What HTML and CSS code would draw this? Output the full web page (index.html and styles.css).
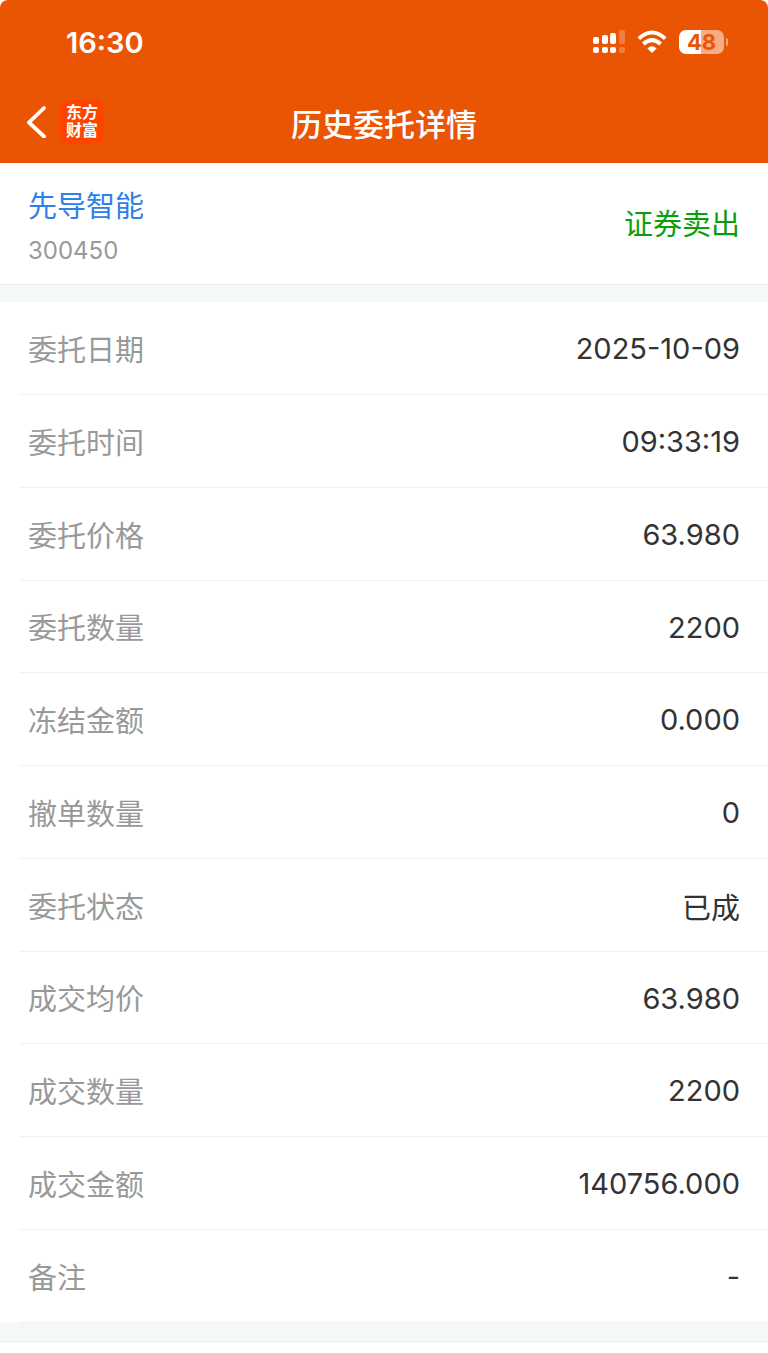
FILE: index.html
```
<!DOCTYPE html>
<html lang="zh-CN">

<head>
  <meta charset="UTF-8" />
  <meta name="viewport" content="width=device-width, initial-scale=1.0" />
  <title>历史委托详情</title>
  <link rel="stylesheet" href="styles.css">
</head>

<body>

  <header class="header">
    <div class="status-bar">
      <span class="clock">16:30</span>
      <div class="status-icons">
        <svg class="signal" viewBox="0 0 32 24" fill="#fff">
          <rect x="0" y="7" width="6" height="7" rx="2" />
          <rect x="9" y="5" width="6" height="9" rx="2" />
          <rect x="17" y="3" width="6" height="11" rx="2" />
          <rect x="26" y="0" width="6" height="14" rx="2" opacity="0.25" />
          <rect x="0" y="17" width="6" height="6" rx="2" />
          <rect x="9" y="17" width="6" height="6" rx="2" />
          <rect x="17" y="17" width="6" height="6" rx="2" />
          <rect x="26" y="17" width="6" height="6" rx="2" opacity="0.25" />
        </svg>
        <svg class="wifi" viewBox="0 0 30 24" fill="none" stroke="#fff" stroke-width="4">
          <path d="M1.8 8.6 Q15 -3.6 28.2 8.6" />
          <path d="M6.4 14 Q15 6.2 23.6 14" />
          <path d="M15 23 L10.4 18.4 Q15 14.2 19.6 18.4 Z" fill="#fff" stroke="none" />
        </svg>
        <div class="battery">
          <span class="battery-level">48</span>
          <span class="battery-tip"></span>
        </div>
      </div>
    </div>

    <nav class="nav-bar">
      <div class="nav-left">
        <button class="back" type="button" aria-label="返回">
          <svg viewBox="0 0 20 32" fill="none" stroke="#fff" stroke-width="3.8" stroke-linecap="round">
            <path d="M17 2 L2 16.5 L17 30.5" />
          </svg>
        </button>
        <div class="logo">
          <div>东方</div>
          <div>财富</div>
        </div>
      </div>
      <h1>历史委托详情</h1>
    </nav>
  </header>

  <main>
    <section class="stock">
      <div>
        <a class="stock-name" href="#">先导智能</a>
        <div class="stock-code">300450</div>
      </div>
      <span class="direction">证券卖出</span>
    </section>

    <dl class="details">
      <div class="row"><dt>委托日期</dt><dd>2025-10-09</dd></div>
      <div class="row"><dt>委托时间</dt><dd>09:33:19</dd></div>
      <div class="row"><dt>委托价格</dt><dd>63.980</dd></div>
      <div class="row"><dt>委托数量</dt><dd>2200</dd></div>
      <div class="row"><dt>冻结金额</dt><dd>0.000</dd></div>
      <div class="row"><dt>撤单数量</dt><dd>0</dd></div>
      <div class="row"><dt>委托状态</dt><dd>已成</dd></div>
      <div class="row"><dt>成交均价</dt><dd>63.980</dd></div>
      <div class="row"><dt>成交数量</dt><dd>2200</dd></div>
      <div class="row"><dt>成交金额</dt><dd>140756.000</dd></div>
      <div class="row"><dt>备注</dt><dd>-</dd></div>
    </dl>
  </main>

</body>

</html>
```
FILE: styles.css
```
* {
  box-sizing: border-box;
}

body {
  margin: 0;
  background: #fff;
  color: #333;
  font-family: Inter, "Noto Sans CJK SC", sans-serif;
  font-size: 29px;
}

.header {
  background: #ea5504;
  color: #fff;
  border-radius: 8px 8px 0 0;
}

.status-bar {
  display: flex;
  justify-content: space-between;
  align-items: center;
  height: 84px;
  padding: 0 40px 0 66px;
}

.clock {
  font-size: 29px;
  font-weight: 600;
}

.status-icons {
  display: flex;
  align-items: center;
  gap: 12px;
}

.signal {
  width: 32px;
  height: 24px;
}

.wifi {
  width: 30px;
  height: 24px;
}

.battery {
  display: flex;
  align-items: center;
  gap: 2px;
}

.battery-level {
  width: 45px;
  border-radius: 7px;
  background: linear-gradient(to right, #fff 48%, #f6ad84 48%);
  color: #ea5504;
  font-size: 22px;
  font-weight: 700;
  line-height: 24px;
  text-align: center;
}

.battery-tip {
  width: 2px;
  height: 8px;
  border-radius: 0 2px 2px 0;
  background: #f6ad84;
}

.nav-bar {
  display: grid;
  grid-template-columns: 1fr auto 1fr;
  align-items: center;
  height: 79px;
  padding: 0 27px 3px;
}

.nav-left {
  display: flex;
  align-items: center;
  gap: 13px;
}

.back {
  width: 20px;
  height: 32px;
  padding: 0;
  border: none;
  background: none;
  cursor: pointer;
}

.back svg {
  display: block;
}

.logo {
  width: 44px;
  height: 44px;
  padding: 4px 0;
  border-radius: 9px;
  background: #ff4400;
  font-family: "Liberation Serif", "Noto Sans CJK SC", sans-serif;
  font-size: 16px;
  font-weight: 700;
  line-height: 18px;
  text-align: center;
}

h1 {
  margin: 0;
  font-size: 31px;
  font-weight: 500;
}

.stock {
  display: flex;
  justify-content: space-between;
  align-items: center;
  height: 121px;
  padding: 0 28px;
}

.stock-name {
  display: block;
  padding-top: 6px;
  color: #2f80e7;
  line-height: 48px;
  text-decoration: none;
}

.stock-code {
  color: #999;
  font-size: 24px;
  line-height: 40px;
}

.direction {
  padding-bottom: 3px;
  color: #0a9f0a;
}

.details {
  margin: 0;
  padding: 18px 0;
  background: #f4f8f9;
  border-bottom: 1px solid #ebeced;
  box-shadow: inset 0 1px #ebeff0;
}

.row {
  display: flex;
  justify-content: space-between;
  align-items: center;
  height: 93px;
  padding: 0 28px;
  background: linear-gradient(#f1f2f3, #f1f2f3) 19px 100% / 100% 1px no-repeat #fff;
}

/* 50pt rows come out slightly under 93px */
.row:nth-child(4n) {
  height: 92px;
}

dt {
  padding-bottom: 2px;
  color: #999;
}

dd {
  margin: 0;
}
```
